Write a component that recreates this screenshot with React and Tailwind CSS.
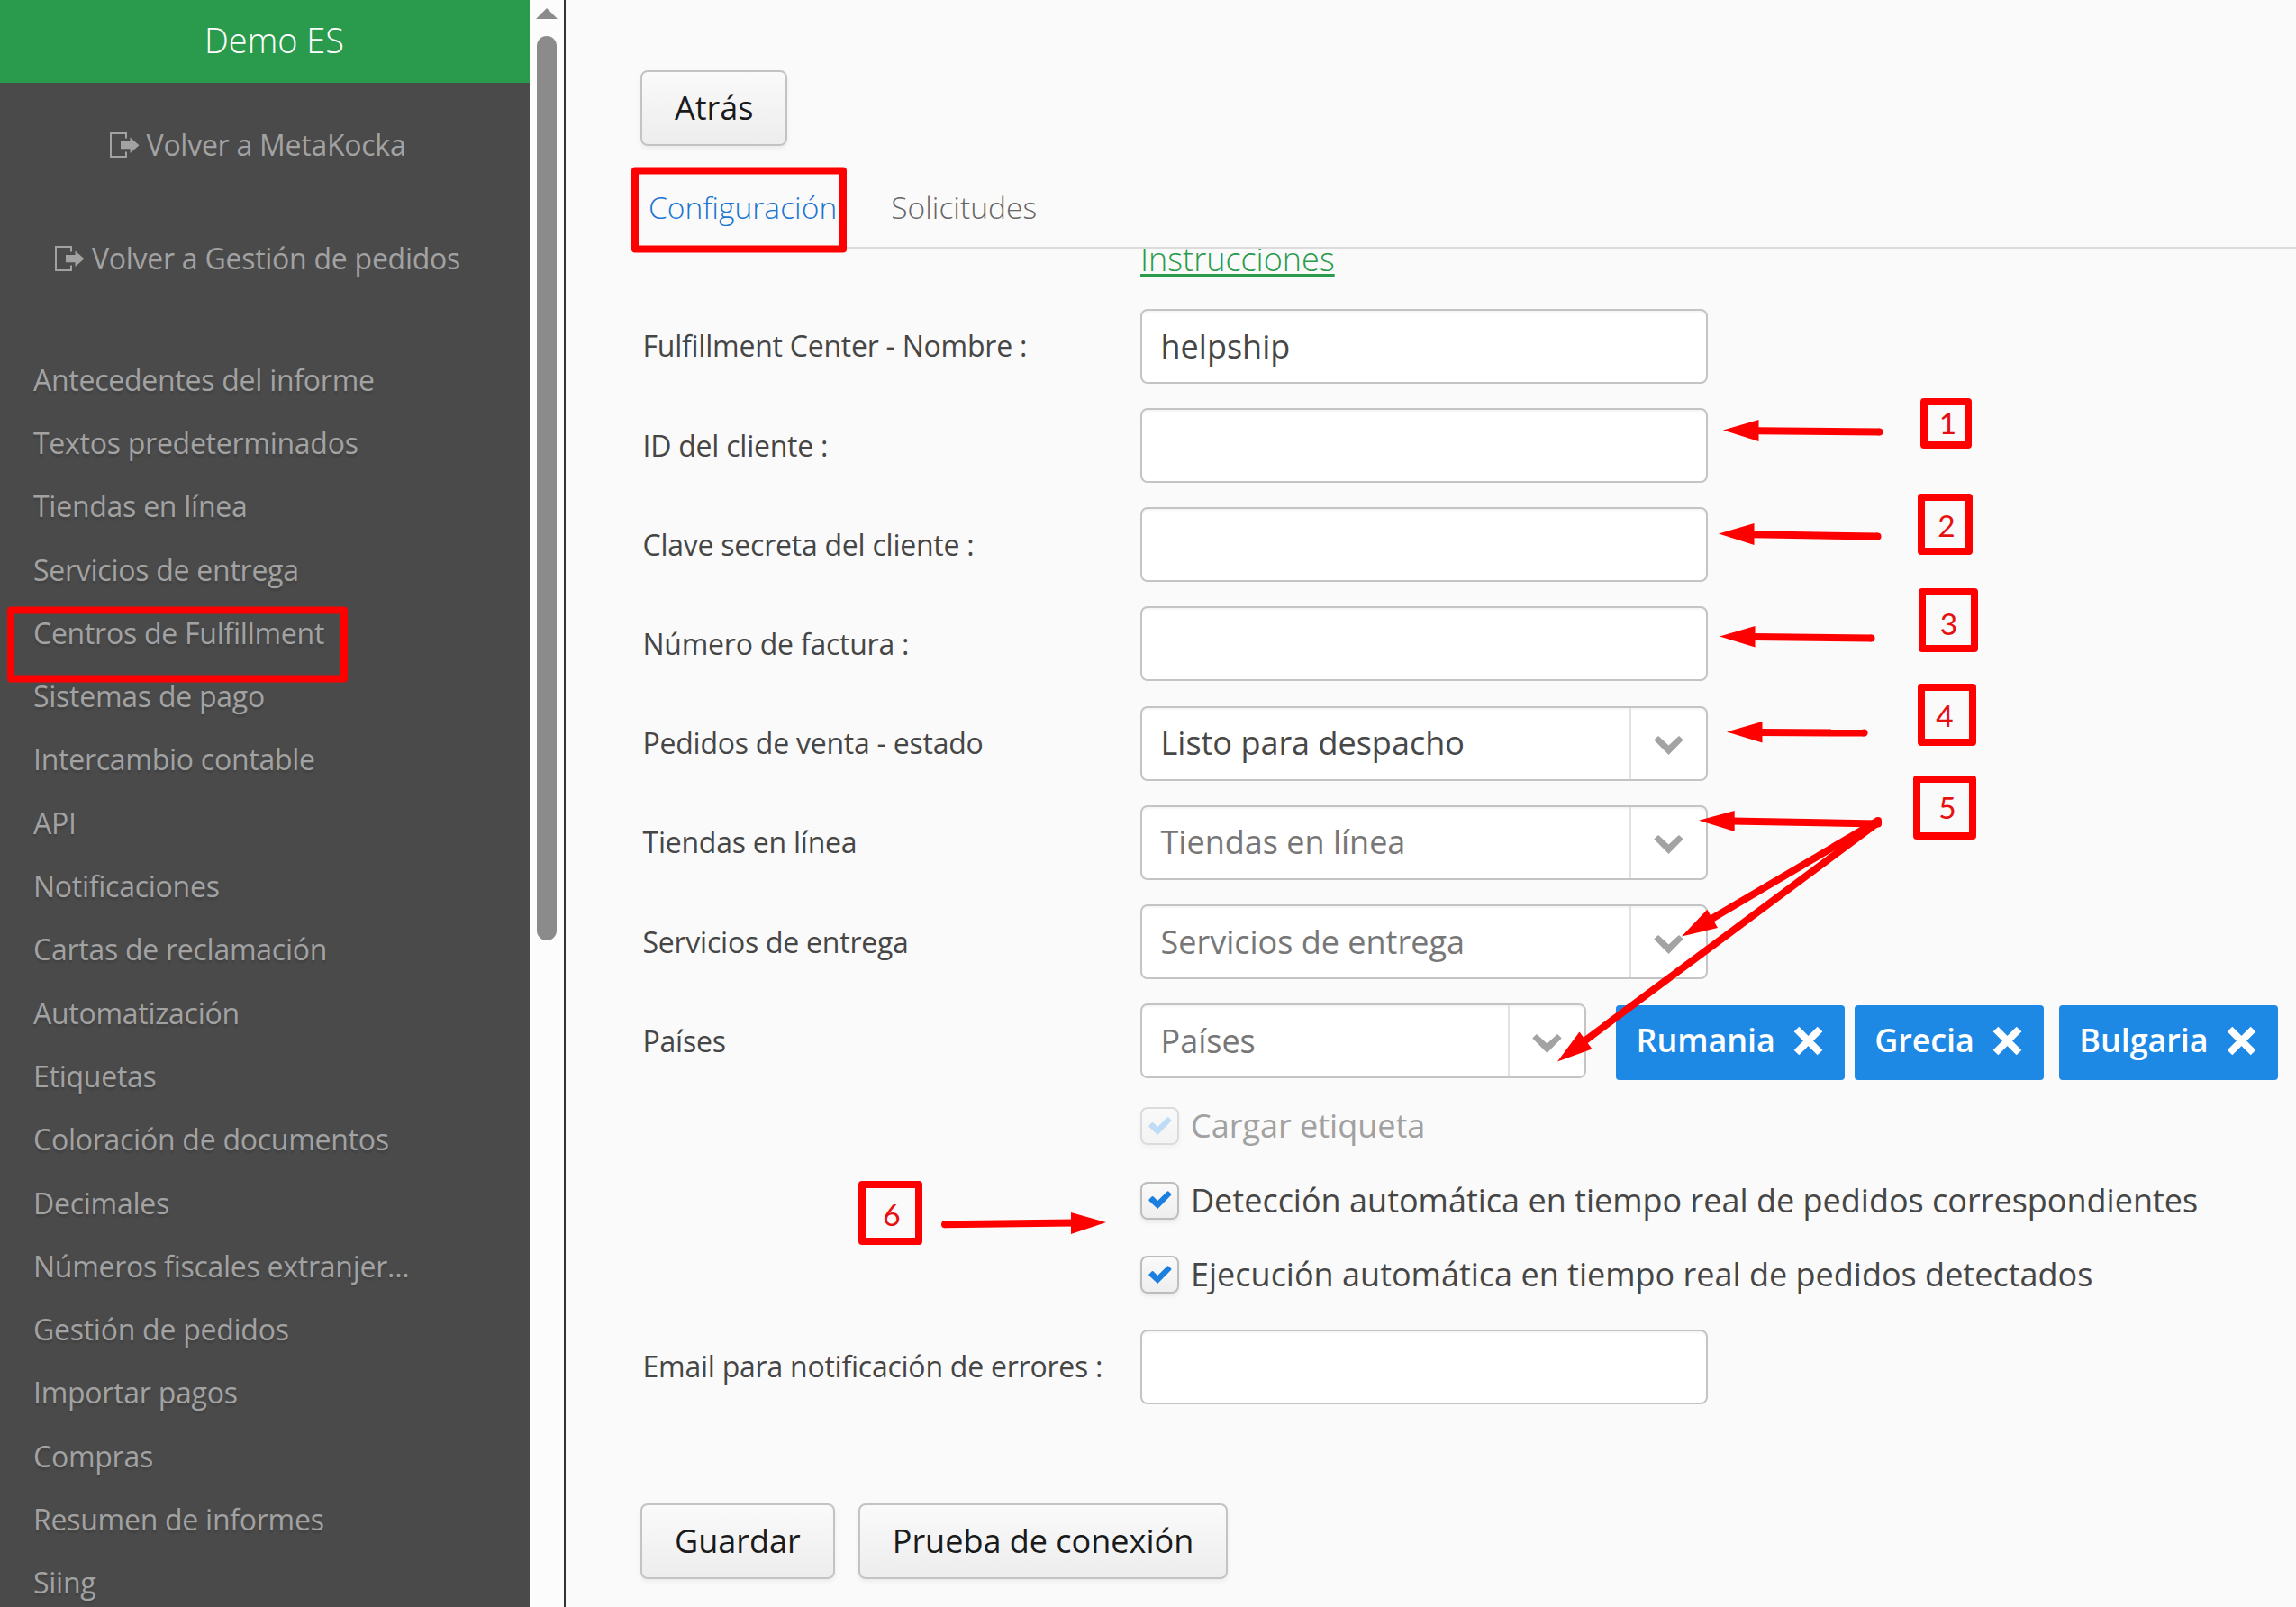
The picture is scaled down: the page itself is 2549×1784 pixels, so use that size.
import { useState } from "react";

const menuItems = [
  "Antecedentes del informe",
  "Textos predeterminados",
  "Tiendas en línea",
  "Servicios de entrega",
  "Centros de Fulfillment",
  "Sistemas de pago",
  "Intercambio contable",
  "API",
  "Notificaciones",
  "Cartas de reclamación",
  "Automatización",
  "Etiquetas",
  "Coloración de documentos",
  "Decimales",
  "Números fiscales extranjer...",
  "Gestión de pedidos",
  "Importar pagos",
  "Compras",
  "Resumen de informes",
  "Siing",
];

// red numbered boxes
const steps = [
  { n: 1, x: 2132, y: 442, w: 57, h: 56, tx: 2162.5, ty: 482 },
  { n: 2, x: 2129, y: 548, w: 61, h: 68, tx: 2161, ty: 595.5 },
  { n: 3, x: 2130, y: 653, w: 66, h: 71, tx: 2163.5, ty: 704.5 },
  { n: 4, x: 2129, y: 759, w: 65, h: 69, tx: 2159, ty: 806.5 },
  { n: 5, x: 2124, y: 861, w: 70, h: 71, tx: 2162, ty: 908.5 },
  { n: 6, x: 953, y: 1311, w: 71, h: 71, tx: 990, ty: 1360.5 },
];

const arrows = [
  { head: "1913,477.5 1952.5,466 1952.5,490", line: [1950, 478.2, 2086.5, 479.6] },
  { head: "1908,592.5 1947.5,581 1947.5,605", line: [1945, 593.2, 2084.5, 595.6] },
  { head: "1909,706.5 1948.5,695 1948.5,718.5", line: [1946, 707, 2077.5, 708.6] },
  { head: "1917,812.6 1956.5,801 1956.5,824.6", line: [1954, 813, 2069.5, 813.6] },
  { head: "1886,910.7 1925.7,900 1925.7,923", line: [1922, 911.4, 2085, 914.5] },
  { head: "1867,1039.5 1895.3,1009.7 1907,1030", line: [1899, 1020.7, 2085, 911] },
  { head: "1729,1178.5 1753.5,1145.5 1767.5,1164.5", line: [1758, 1156.5, 2085, 913] },
  { head: "1228,1357 1189,1346 1189,1370", line: [1192, 1357.4, 1049, 1359.3] },
];

function ExitIcon() {
  return (
    <svg width="33" height="28" viewBox="0 0 33 28" className="shrink-0">
      <path d="M18 6.5V1H1v26h17v-5.5" fill="none" stroke="#a2a2a2" strokeWidth="2" />
      <path d="M12 10h10.500V5.500L32.500 14.200 22.500 23v-4.700H12z" fill="#a2a2a2" />
    </svg>
  );
}

function Chevron() {
  return (
    <svg width="33" height="21" viewBox="0 0 33 21" className="mt-[5px]">
      <path d="M0.300 4.500 4.300 0.400Q5 0 5.700 0.400L16.500 10.600 27.300 0.400Q28 0 28.700 0.400L32.700 4.500 16.500 21z" fill="#a3a3a3" />
    </svg>
  );
}

function Button({ children, className = "" }) {
  return (
    <button
      className={`h-[84px] px-[36px] rounded-[8px] border-2 border-[#c3c3c3] bg-gradient-to-b from-[#fafafa] to-[#ededed] text-[36px] text-[#1a1a1a] shadow-[0_3px_5px_rgba(0,0,0,0.06)] ${className}`}
    >
      {children}
    </button>
  );
}

function Row({ label, children }) {
  return (
    <div className="flex h-[110.2px] items-center">
      <label className="w-[555px] shrink-0 pl-[2.500px] text-[32px] tracking-[-0.24px] text-[#464646] whitespace-nowrap">
        {label}
      </label>
      {children}
    </div>
  );
}

function TextInput({ value, onChange }) {
  return (
    <input
      type="text"
      value={value}
      onChange={(e) => onChange(e.target.value)}
      className="h-[83px] w-[630px] rounded-[8px] border-2 border-[#c4c4c4] bg-white px-[20.5px] text-[36px] text-[#474747] shadow-[inset_0_2px_2px_rgba(0,0,0,0.04)] outline-none"
    />
  );
}

function Select({ text, filled, width = "w-[630px]" }) {
  return (
    <div
      className={`${width} flex h-[83px] shrink-0 rounded-[8px] border-2 border-[#c4c4c4] bg-white shadow-[inset_0_2px_2px_rgba(0,0,0,0.04)]`}
    >
      <span className={`flex flex-1 items-center pl-[20.5px] text-[36px] ${filled ? "text-[#474747]" : "text-[#777777]"}`}>
        {text}
      </span>
      <span className="flex w-[85px] items-center justify-center border-l-2 border-[#e2e2e2]">
        <Chevron />
      </span>
    </div>
  );
}

function Tag({ name, onRemove, className = "" }) {
  return (
    <span
      className={`flex h-[83px] shrink-0 items-center rounded-[4px] bg-[#1e88e5] pl-[22.5px] pr-[24px] text-[36px] tracking-[-0.1px] font-semibold text-white ${className}`}
    >
      <span className="-mt-[5px]">{name}</span>
      <button onClick={onRemove} className="ml-[20.5px] -mt-[4px]">
        <svg width="33" height="33" viewBox="0 0 33 33" className="block">
          <path d="M3.500 3.500 29.500 29.500M29.500 3.500 3.500 29.500" stroke="#fff" strokeWidth="8" />
        </svg>
      </button>
    </span>
  );
}

function Check({ label, disabled }) {
  return (
    <div className="flex h-[82.5px] items-center pl-[555px]">
      <span
        className={`flex h-[42px] w-[43px] shrink-0 items-center justify-center rounded-[8px] border-2 bg-gradient-to-b from-[#fafafa] to-[#eeeeee] shadow-[0_3px_5px_rgba(0,0,0,0.07)] ${
          disabled ? "border-[#bdbdbd] opacity-50" : "border-[#bdbdbd]"
        }`}
      >
        <svg width="26" height="20" viewBox="0 0 26 20" className="-mt-px">
          <path
            d="M0.600 9.600 3.800 6.300Q4.500 5.700 5.300 6.300L10.200 11 20.600 0.700Q21.600 0 22.600 0.700L25.200 3.200Q25.800 4 25.200 4.800L10.200 20 0.600 11Q0 10.300 0.600 9.600z"
            fill={disabled ? "#86bdf3" : "#1b7fe0"}
          />
        </svg>
      </span>
      <span className={`ml-[13px] text-[36px] whitespace-nowrap ${disabled ? "text-[#a1a1a1]" : "text-[#464646]"}`}>
        {label}
      </span>
    </div>
  );
}

function Sidebar() {
  return (
    <aside className="w-[588px] shrink-0 bg-[#4a4a4a] text-[32px] tracking-[-0.26px] text-[#a2a2a2]">
      <div className="flex h-[92px] items-center justify-center bg-[#2a9b4d] pb-[3px] pl-[21px] text-[38px] tracking-normal font-light text-white">
        Demo ES
      </div>

      <div className="mt-[6px] flex h-[126px] items-center justify-center gap-[8px] pr-[16px]">
        <ExitIcon />
        Volver a MetaKocka
      </div>
      <div className="flex h-[126px] items-center justify-center gap-[8px] pr-[16px]">
        <ExitIcon />
        Volver a Gestión de pedidos
      </div>

      <ul className="mt-[36.5px] pl-[37px] [text-shadow:0_3px_2px_rgba(0,0,0,0.12)]">
        {menuItems.map((item) => (
          <li key={item} className="flex h-[70.300px] items-center">
            {item}
          </li>
        ))}
      </ul>
    </aside>
  );
}

function ScrollBar() {
  return (
    <div className="flex w-[38px] shrink-0 flex-col bg-[#fcfcfc] pl-[7px] pt-[9px]">
      <svg width="24" height="12" viewBox="0 0 24 12">
        <path d="M12 0 24 12H0z" fill="#8b8b8b" />
      </svg>
      <div className="ml-px mt-[19px] h-[1004px] w-[22px] rounded-full bg-[#8b8b8b]" />
    </div>
  );
}

function Annotations() {
  return (
    <svg width="2549" height="1784" className="pointer-events-none absolute left-0 top-0">
      <g fill="none" stroke="#ff0000" strokeWidth="8" strokeLinejoin="round">
        <rect x="12" y="677.500" width="370" height="76" />
        <rect x="705" y="189.500" width="231" height="87" />
        {steps.map((s) => (
          <rect key={s.n} x={s.x + 4} y={s.y + 4} width={s.w - 8} height={s.h - 8} />
        ))}
      </g>
      {arrows.map((a) => (
        <g key={a.head} fill="#ff0000">
          <polygon points={a.head} />
          <line
            x1={a.line[0]}
            y1={a.line[1]}
            x2={a.line[2]}
            y2={a.line[3]}
            stroke="#ff0000"
            strokeWidth="8"
          />
          <circle cx={a.line[2]} cy={a.line[3]} r="4" />
        </g>
      ))}
      {steps.map((s) => (
        <text key={s.n} x={s.tx} y={s.ty} textAnchor="middle" fill="#e61010" className="font-['Lato',sans-serif] text-[33.5px]">
          {s.n}
        </text>
      ))}
    </svg>
  );
}

export default function App() {
  const [name, setName] = useState("helpship");
  const [clientId, setClientId] = useState("");
  const [secret, setSecret] = useState("");
  const [invoice, setInvoice] = useState("");
  const [email, setEmail] = useState("");
  const [countries, setCountries] = useState(["Rumania", "Grecia", "Bulgaria"]);

  const removeCountry = (country) => {
    setCountries(countries.filter((c) => c !== country));
  };

  return (
    <div className="relative flex h-[1784px] w-[2549px] overflow-hidden bg-[#fafafa] font-['Open_Sans',sans-serif]">
      <Sidebar />
      <ScrollBar />

      <main className="flex-1 border-l-2 border-[#333333] pl-[83px] pt-[78px]">
        <Button className="block pb-[1px]">Atrás</Button>

        {/* Tabs */}
        <div className="flex h-[114px] items-center gap-[60px] border-b-2 border-[#dcdcdc] pl-[9px] pt-[25px] text-[33.600px] font-light">
          <span className="text-[#1b75d0]">Configuración</span>
          <span className="text-[#666666]">Solicitudes</span>
        </div>

        {/* Scrolled form, the link is cut by the tab line */}
        <div className="h-[53.3px] overflow-hidden pl-[555px]">
          <a
            href="#"
            className="-mt-[13.5px] block w-fit text-[36px] leading-[49px] font-light text-[#2a9b4d] underline decoration-[3px] underline-offset-[3px] [text-decoration-skip-ink:none]"
          >
            Instrucciones
          </a>
        </div>

        <Row label="Fulfillment Center - Nombre :">
          <TextInput value={name} onChange={setName} />
        </Row>
        <Row label="ID del cliente :">
          <TextInput value={clientId} onChange={setClientId} />
        </Row>
        <Row label="Clave secreta del cliente :">
          <TextInput value={secret} onChange={setSecret} />
        </Row>
        <Row label="Número de factura :">
          <TextInput value={invoice} onChange={setInvoice} />
        </Row>
        <Row label="Pedidos de venta - estado">
          <Select text="Listo para despacho" filled />
        </Row>
        <Row label="Tiendas en línea">
          <Select text="Tiendas en línea" />
        </Row>
        <Row label="Servicios de entrega">
          <Select text="Servicios de entrega" />
        </Row>
        <Row label="Países">
          <Select text="Países" width="w-[495px]" />
          <div className="ml-[33px] mt-[4px] flex gap-[10.500px]">
            {countries.map((country) => (
              <Tag
                key={country}
                name={country}
                onRemove={() => removeCountry(country)}
                className={country === "Bulgaria" ? "ml-[6px]" : ""}
              />
            ))}
          </div>
        </Row>

        <div className="-mt-[2px] mb-[6px]">
          <Check label="Cargar etiqueta" disabled />
          <Check label="Detección automática en tiempo real de pedidos correspondientes" />
          <Check label="Ejecución automática en tiempo real de pedidos detectados" />
        </div>

        <Row label="Email para notificación de errores :">
          <TextInput value={email} onChange={setEmail} />
        </Row>

        <div className="mt-[96.5px] flex gap-[26px]">
          <Button>Guardar</Button>
          <Button>Prueba de conexión</Button>
        </div>
      </main>

      <Annotations />
    </div>
  );
}
